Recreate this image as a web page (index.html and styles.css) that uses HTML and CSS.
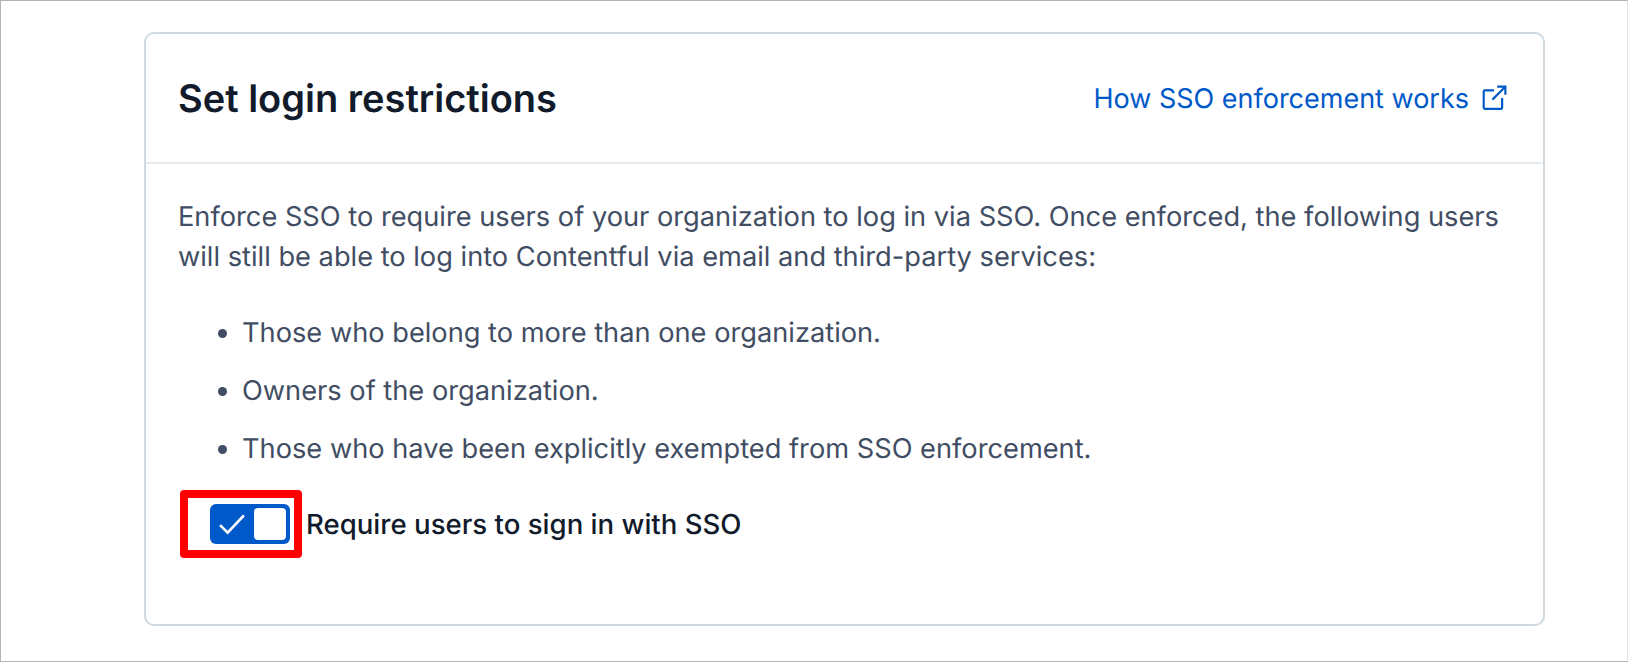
FILE: index.html
```html
<!DOCTYPE html>
<html lang="en">
<head>
  <meta charset="UTF-8" />
  <title>Set login restrictions</title>
  <link rel="stylesheet" href="styles.css">
</head>
<body>
  <div class="frame">
    <div class="card">
      <div class="card-head">
        <h1>Set login restrictions</h1>
        <a class="help-link" href="#">How SSO enforcement works
          <svg class="ext-icon" viewBox="0 0 24 24" fill="none" stroke="currentColor" stroke-width="2">
            <path d="M12 5H3.500a1 1 0 0 0-1 1v15a1 1 0 0 0 1 1h15a1 1 0 0 0 1-1v-9" />
            <path d="M10.500 13.500 22 2M15 1.500h7.500V9" />
          </svg>
        </a>
      </div>
      <div class="card-body">
        <p>Enforce SSO to require users of your organization to log in via SSO. Once enforced, the following users will still be able to log into Contentful via email and third-party services:</p>
        <ul>
          <li>Those who belong to more than one organization.</li>
          <li>Owners of the organization.</li>
          <li>Those who have been explicitly exempted from SSO enforcement.</li>
        </ul>
        <div class="switch-row">
          <div class="highlight">
            <div class="switch">
              <svg class="check" viewBox="0 0 24 20" fill="none" stroke="#fff" stroke-width="2.500">
                <path d="M1 11l7 7L23 2" />
              </svg>
              <span class="knob"></span>
            </div>
          </div>
          <span class="switch-label">Require users to sign in with SSO</span>
        </div>
      </div>
    </div>
  </div>
</body>
</html>
```

FILE: styles.css
```css
html, body {
  margin: 0;
  height: 100%;
}
body {
  font-family: Inter, 'Liberation Sans', sans-serif;
  text-rendering: geometricPrecision;
  background: #fff;
}
.frame {
  box-sizing: border-box;
  height: 662px;
  padding: 31px 82px 36px 143px;
  border-top: 1px solid #b4b4b4;
  border-left: 1px solid #b4b4b4;
  border-bottom: 1px solid #b4b4b4;
  border-right: 1px solid #e4e4e4;
}
.card {
  box-sizing: border-box;
  height: 594px;
  border: 2px solid #cfd9e0;
  border-radius: 10px;
}
.card-head {
  display: flex;
  justify-content: space-between;
  align-items: center;
  height: 128px;
  padding: 0 36px 0 32px;
  border-bottom: 2px solid #e7ebee;
}
h1 {
  margin: 2px 0 0;
  font-size: 38px;
  font-weight: 600;
  color: #111b2b;
}
.help-link {
  display: flex;
  align-items: center;
  gap: 12px;
  font-size: 27px;
  color: #0059c8;
  text-decoration: none;
}
.ext-icon {
  width: 26px;
  height: 26px;
}
.card-body {
  padding: 33px 32px 0 32px;
  font-size: 27.23px;
  line-height: 40px;
  color: #414d63;
}
p {
  margin: 0;
}
ul {
  margin: 36px 0 0;
  padding-left: 64px;
}
li {
  margin-bottom: 18px;
}
.switch-row {
  display: flex;
  align-items: center;
  gap: 4px;
  margin-top: 21px;
}
.highlight {
  display: flex;
  align-items: center;
  box-sizing: border-box;
  width: 122px;
  height: 68px;
  margin-left: 2px;
  padding-left: 22px;
  border: 8px solid #ff0000;
  border-radius: 4px;
}
.switch {
  display: flex;
  align-items: center;
  justify-content: space-between;
  box-sizing: border-box;
  width: 80px;
  height: 40px;
  padding: 4px;
  background: #0059c8;
  border-radius: 6px;
}
.check {
  width: 26px;
  height: 22px;
  margin-left: 5px;
}
.knob {
  width: 32px;
  height: 32px;
  background: #fff;
  border-radius: 4px;
}
.switch-label {
  font-size: 27.6px;
  font-weight: 450;
  color: #111b2b;
}
```
